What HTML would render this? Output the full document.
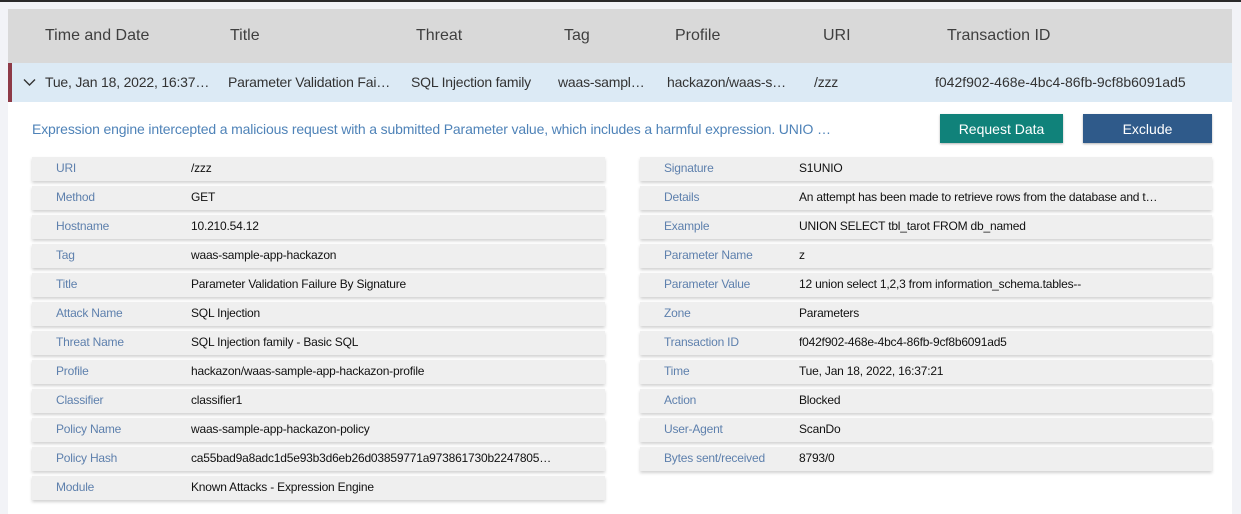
<!DOCTYPE html>
<html><head><style>
*{margin:0;padding:0;box-sizing:border-box}
body{width:1241px;height:514px;background:#f2f3f7;font-family:"Liberation Sans",sans-serif;position:relative;overflow:hidden}
.top{position:absolute;left:0;top:0;width:1241px;height:2px;background:#2a2a2a}
.panel{position:absolute;left:8px;top:9px;width:1224px;height:505px;background:#fff}
.hdr{position:absolute;left:0;top:0;width:1224px;height:54px;background:#d9d9d9}
.hdr span{position:absolute;top:18px;font-size:16px;color:#3f3f3f}
.row{position:absolute;left:0;top:54px;width:1224px;height:39px;background:#dceaf5}
.row .bar{position:absolute;left:0;top:0;width:4px;height:39px;background:#8e3a47}
.row span{position:absolute;top:11px;font-size:14px;color:#333;white-space:nowrap;overflow:hidden;text-overflow:ellipsis;letter-spacing:-0.2px}
.desc{position:absolute;left:24px;top:112px;font-size:14px;color:#4f83b8;white-space:nowrap;width:808px;overflow:hidden;text-overflow:ellipsis;letter-spacing:-0.15px}
.btn{position:absolute;top:105px;height:29px;color:#fff;font-size:14px;text-align:center;line-height:30px;box-shadow:0 1px 2px rgba(0,0,0,.3)}
.card{position:absolute;height:24px;background:#efefef;box-shadow:0 2px 3px rgba(0,0,0,.18)}
.card .l{position:absolute;left:24px;top:4px;font-size:12px;color:#5e80ad;letter-spacing:-0.2px}
.card .v{position:absolute;top:4px;font-size:12px;color:#111;white-space:nowrap;letter-spacing:-0.2px}
</style></head><body>
<div class="top"></div>
<div class="panel">
<div class="hdr">
<span style="left:37px">Time and Date</span>
<span style="left:222px">Title</span>
<span style="left:408px">Threat</span>
<span style="left:556px">Tag</span>
<span style="left:667px">Profile</span>
<span style="left:815px">URI</span>
<span style="left:939px">Transaction ID</span>
</div>
<div class="row"><div class="bar"></div>
<svg style="position:absolute;left:15px;top:15px" width="13" height="9" viewBox="0 0 13 9"><path d="M1 1.5 L6.5 7 L12 1.5" fill="none" stroke="#333" stroke-width="1.4"/></svg>
<span style="left:37px;width:166px">Tue, Jan 18, 2022, 16:37:21</span>
<span style="left:220px;width:164px">Parameter Validation Failure</span>
<span style="left:403px;width:124px">SQL Injection family</span>
<span style="left:550px;width:90px">waas-sample-app</span>
<span style="left:659px;width:122px">hackazon/waas-sample</span>
<span style="left:806px">/zzz</span>
<span style="left:927px;letter-spacing:0">f042f902-468e-4bc4-86fb-9cf8b6091ad5</span>
</div>
<div class="desc">Expression engine intercepted a malicious request with a submitted Parameter value, which includes a harmful expression. UNIO SELECT</div>
<div class="btn" style="left:932px;width:123px;background:#10827a">Request Data</div>
<div class="btn" style="left:1075px;width:129px;background:#2f5a8a">Exclude</div>
</div>
<div id="cards"></div>
<script>
var L=[["URI","/zzz"],["Method","GET"],["Hostname","10.210.54.12"],["Tag","waas-sample-app-hackazon"],["Title","Parameter Validation Failure By Signature"],["Attack Name","SQL Injection"],["Threat Name","SQL Injection family - Basic SQL"],["Profile","hackazon/waas-sample-app-hackazon-profile"],["Classifier","classifier1"],["Policy Name","waas-sample-app-hackazon-policy"],["Policy Hash","ca55bad9a8adc1d5e93b3d6eb26d03859771a973861730b2247805…"],["Module","Known Attacks - Expression Engine"]];
var R=[["Signature","S1UNIO"],["Details","An attempt has been made to retrieve rows from the database and t…"],["Example","UNION SELECT tbl_tarot FROM db_named"],["Parameter Name","z"],["Parameter Value","12 union select 1,2,3 from information_schema.tables--"],["Zone","Parameters"],["Transaction ID","f042f902-468e-4bc4-86fb-9cf8b6091ad5"],["Time","Tue, Jan 18, 2022, 16:37:21"],["Action","Blocked"],["User-Agent","ScanDo"],["Bytes sent/received","8793/0"]];
var h="";
L.forEach(function(r,i){h+='<div class="card" style="left:32px;top:'+(157+i*29)+'px;width:573px"><span class="l">'+r[0]+'</span><span class="v" style="left:159px">'+r[1]+'</span></div>'});
R.forEach(function(r,i){h+='<div class="card" style="left:640px;top:'+(157+i*29)+'px;width:572px"><span class="l">'+r[0]+'</span><span class="v" style="left:159px">'+r[1]+'</span></div>'});
document.getElementById("cards").innerHTML=h;
</script>
</body></html>
